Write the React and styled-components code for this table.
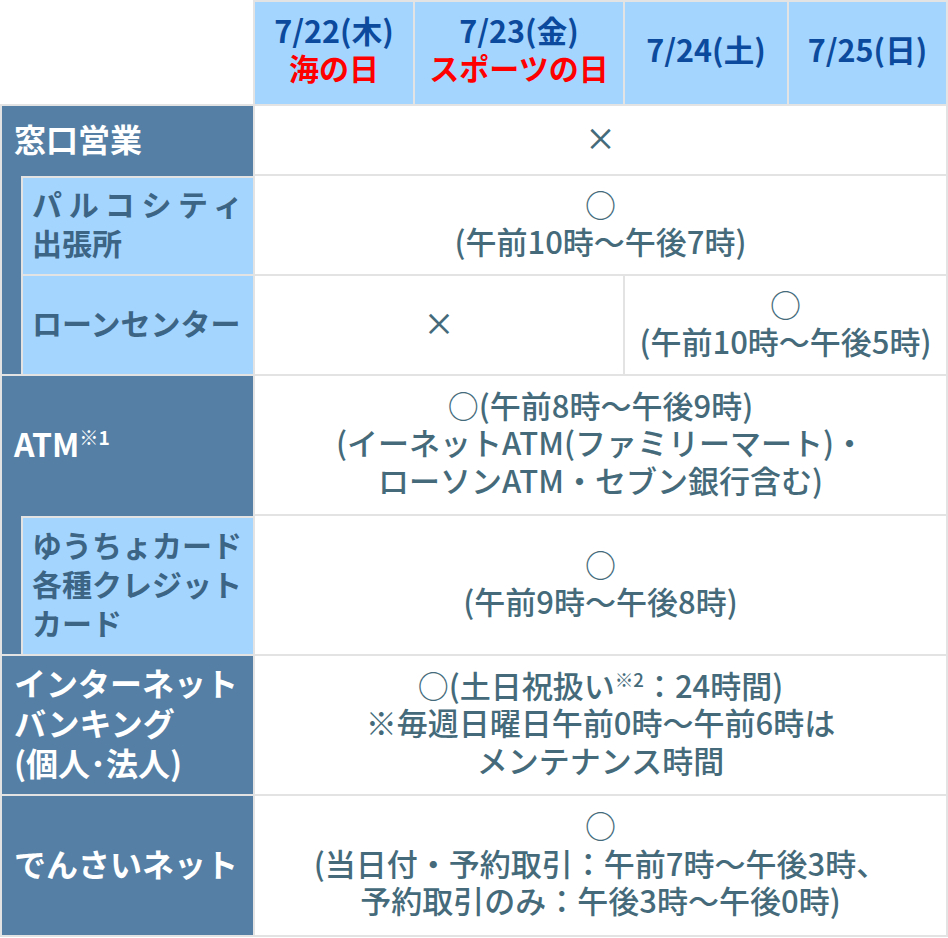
import React from 'react'
import styled, { createGlobalStyle, css } from 'styled-components'

const GlobalStyle = createGlobalStyle`
  html, body {
    margin: 0;
    padding: 0;
    background: #fff;
  }
`

const line = '2px solid #e3e3e3'

const Table = styled.table`
  width: 948px;
  table-layout: fixed;
  border-collapse: separate;
  border-spacing: 0;
  font-family: 'Noto Sans CJK JP', 'Noto Sans', sans-serif;
`

const Row = styled.tr`
  height: ${props => props.$h}px;
`

const Corner = styled.td`
  background: #fff;
  border-right: ${line};
  border-bottom: ${line};
  padding: 0;
`

const HeadCell = styled.th`
  background: #a4d5fe;
  border-top: ${line};
  border-right: ${line};
  border-bottom: ${line};
  color: #0b4a9d;
  font-size: 30.5px;
  font-weight: 700;
  line-height: 37px;
  text-align: center;
  white-space: nowrap;
  padding: 0 0 8px;
  span {
    display: block;
    color: #ff0000;
    font-size: 30px;
  }
`

const Label = styled.td`
  background: #557fa5;
  color: #fff;
  font-size: 32px;
  font-weight: 700;
  line-height: 40px;
  text-align: left;
  padding: 0 12px 6px;
  border-left: ${line};
  border-right: ${line};
  border-bottom: ${props => (props.$open ? 'none' : line)};
`

const Strip = styled.td`
  background: #557fa5;
  border-left: ${line};
  border-right: ${line};
  border-bottom: ${line};
  padding: 0;
`

const SubLabel = styled.td`
  background: #a4d5fe;
  color: #3c6484;
  font-size: 30px;
  font-weight: 700;
  line-height: 39px;
  text-align: left;
  white-space: nowrap;
  padding: 0 10px 6px 9px;
  border-right: ${line};
  border-bottom: ${line};
  ${props => props.$first && css`border-top: ${line};`}
`

const Spread = styled.span`
  display: block;
  text-align: justify;
  text-align-last: justify;
`

const Data = styled.td`
  background: #fff;
  color: #456b7b;
  font-size: 31px;
  font-weight: 500;
  line-height: 37.5px;
  text-align: center;
  white-space: nowrap;
  padding: 0 2px 6px;
  border-right: ${line};
  border-bottom: ${line};
`

const Note = styled.sup`
  font-size: 0.6em;
  line-height: 0;
  vertical-align: 0.6em;
`

const dates = [
  { d: '7/22(木)', h: '海の日' },
  { d: '7/23(金)', h: 'スポーツの日' },
  { d: '7/24(土)' },
  { d: '7/25(日)' },
]

export default function App() {
  return (
    <>
      <GlobalStyle />
      <Table>
        <colgroup>
          <col style={{ width: 23 }} />
          <col style={{ width: 232 }} />
          <col style={{ width: 160 }} />
          <col style={{ width: 210 }} />
          <col style={{ width: 164 }} />
          <col style={{ width: 159 }} />
        </colgroup>
        <tbody>
          <Row $h={106}>
            <Corner colSpan={2} />
            {dates.map(x => (
              <HeadCell key={x.d}>
                {x.d}
                {x.h && <span>{x.h}</span>}
              </HeadCell>
            ))}
          </Row>
          <Row $h={70}>
            <Label colSpan={2} $open>窓口営業</Label>
            <Data colSpan={4}>×</Data>
          </Row>
          <Row $h={100}>
            <Strip rowSpan={2} />
            <SubLabel $first><Spread>パルコシティ</Spread>出張所</SubLabel>
            <Data colSpan={4}>○<br />(午前10時〜午後7時)</Data>
          </Row>
          <Row $h={100}>
            <SubLabel>ローンセンター</SubLabel>
            <Data colSpan={2}>×</Data>
            <Data colSpan={2}>○<br />(午前10時〜午後5時)</Data>
          </Row>
          <Row $h={140}>
            <Label colSpan={2} $open>ATM<Note>※1</Note></Label>
            <Data colSpan={4}>
              ○(午前8時〜午後9時)<br />
              (イーネットATM(ファミリーマート)・<br />
              ローソンATM・セブン銀行含む)
            </Data>
          </Row>
          <Row $h={140}>
            <Strip />
            <SubLabel $first>ゆうちょカード<br />各種クレジット<br />カード</SubLabel>
            <Data colSpan={4}>○<br />(午前9時〜午後8時)</Data>
          </Row>
          <Row $h={140}>
            <Label colSpan={2}>インターネット<br />バンキング<br />(個人･法人)</Label>
            <Data colSpan={4}>
              ○(土日祝扱い<Note>※2</Note>：24時間)<br />
              ※毎週日曜日午前0時〜午前6時は<br />
              メンテナンス時間
            </Data>
          </Row>
          <Row $h={141}>
            <Label colSpan={2}>でんさいネット</Label>
            <Data colSpan={4}>
              ○<br />
              (当日付・予約取引：午前7時〜午後3時、<br />
              予約取引のみ：午後3時〜午後0時)
            </Data>
          </Row>
        </tbody>
      </Table>
    </>
  )
}
